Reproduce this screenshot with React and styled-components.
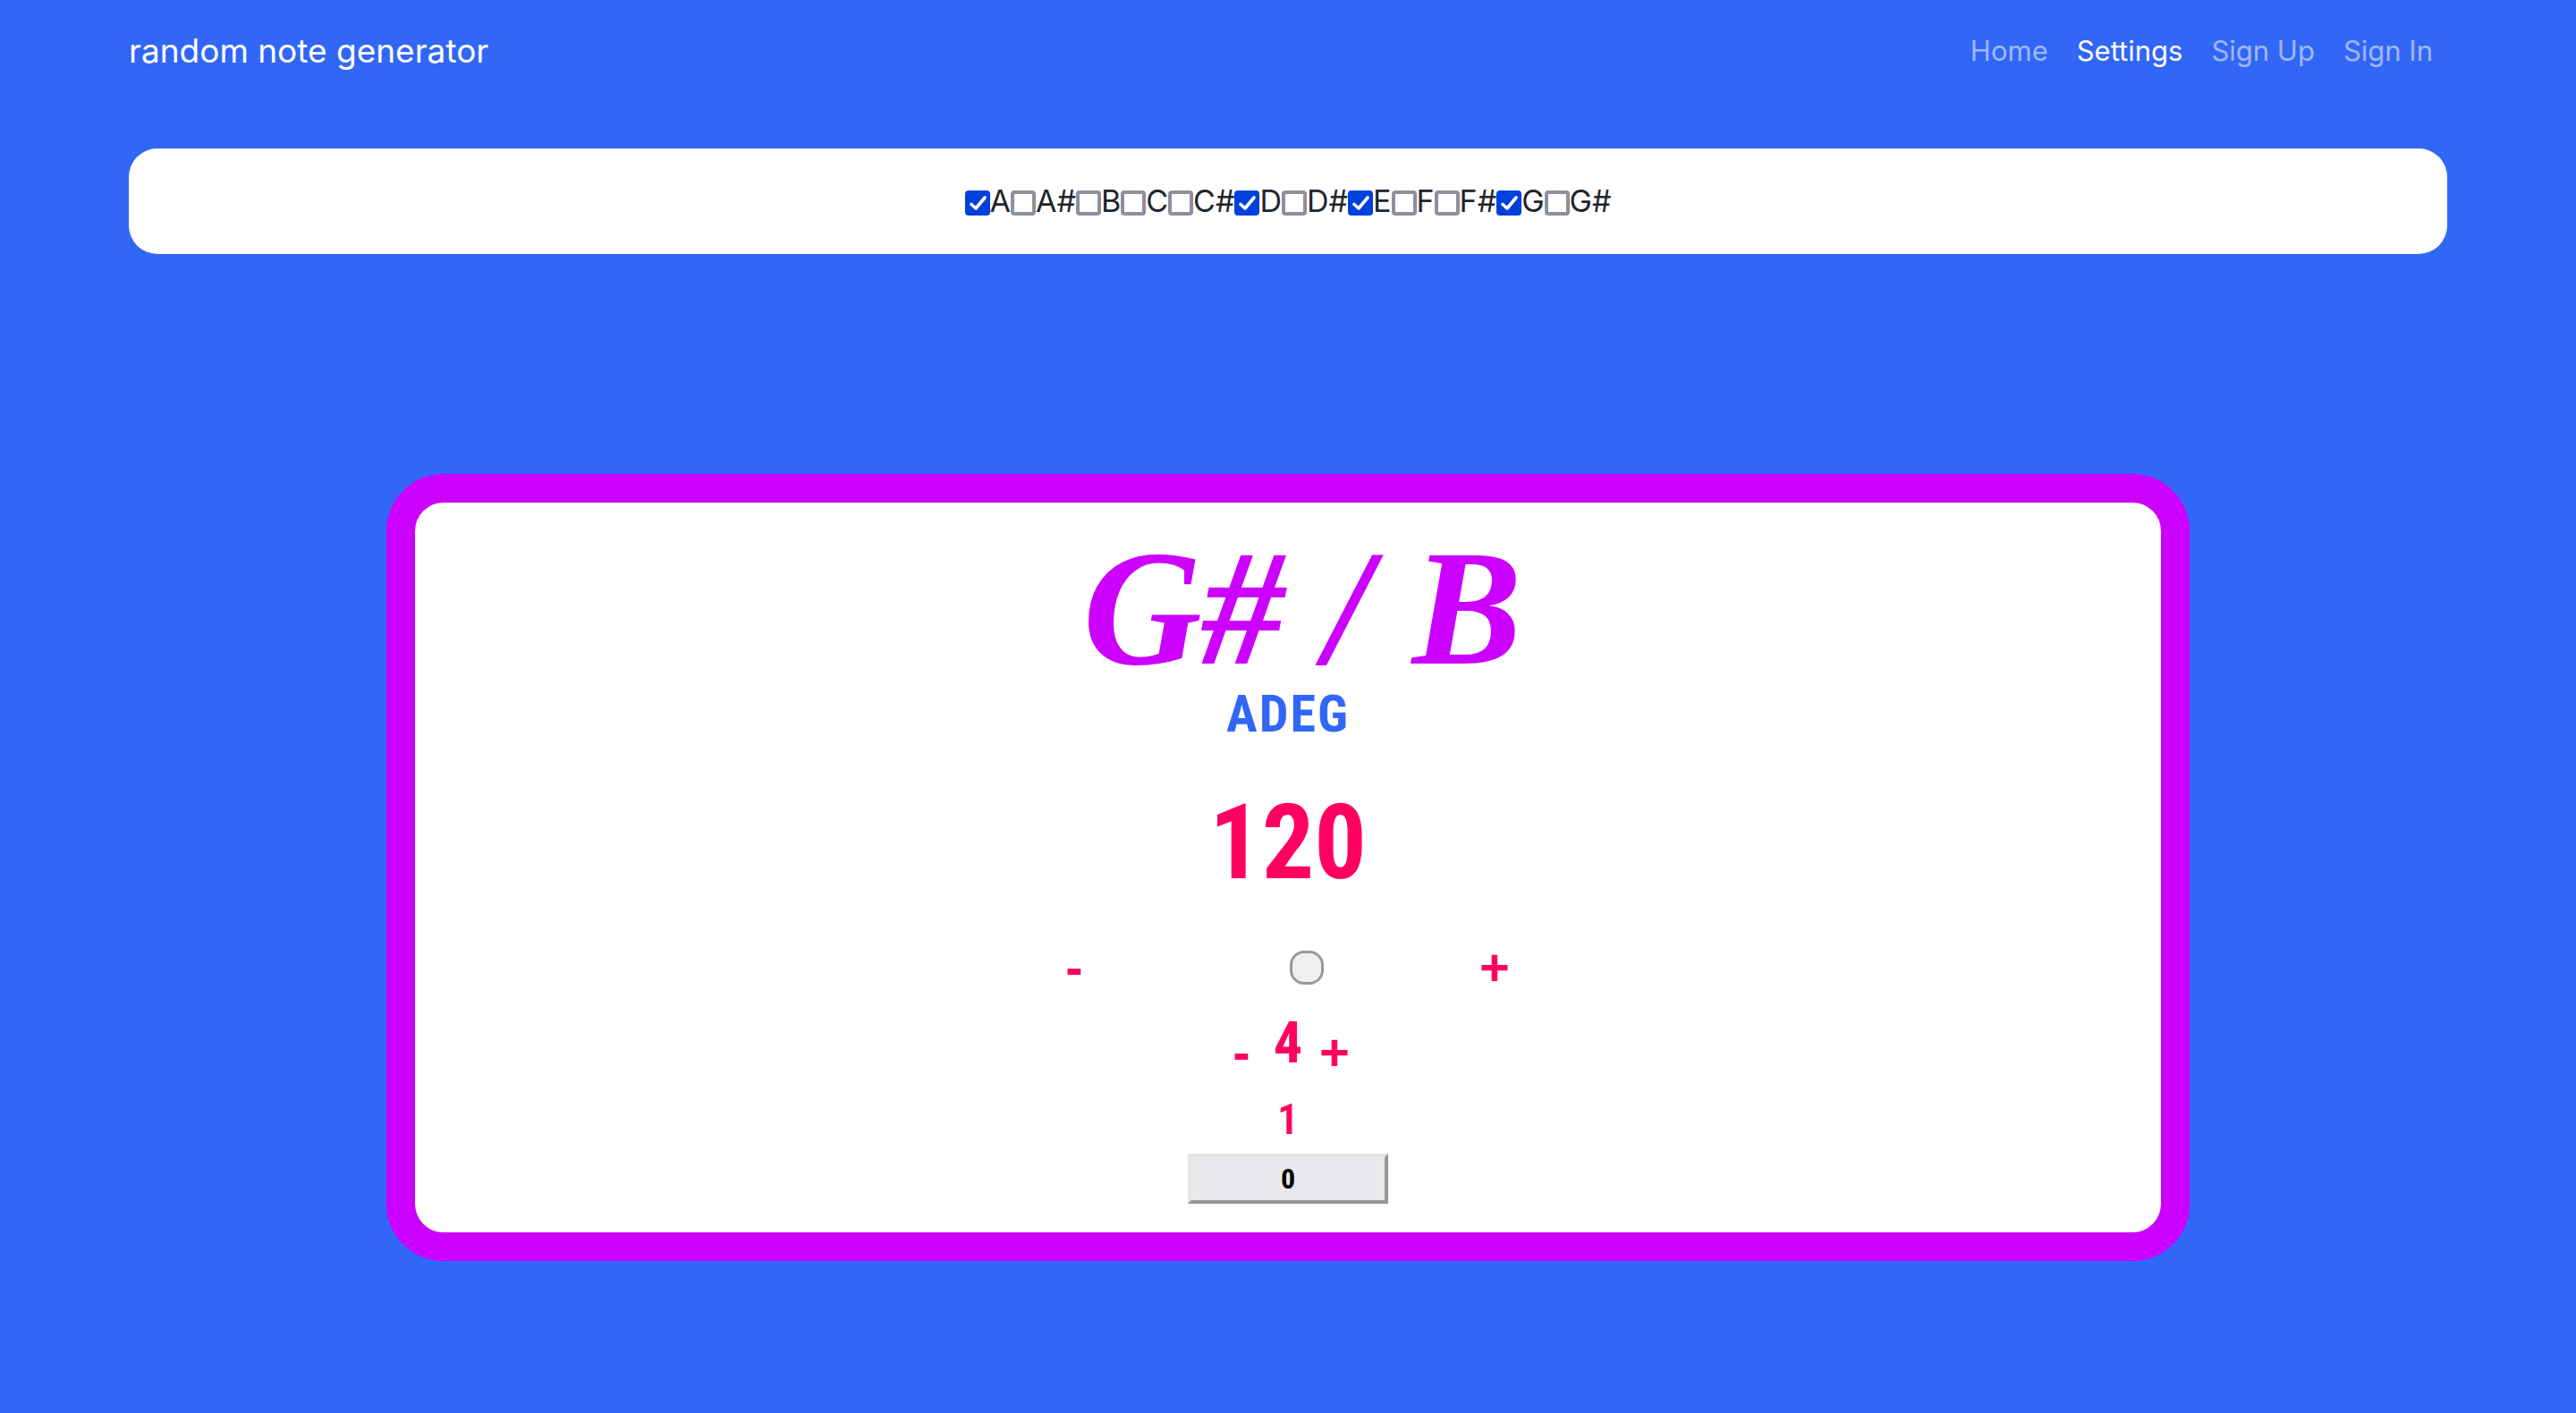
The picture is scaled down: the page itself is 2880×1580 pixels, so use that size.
import React, { useState } from "react";
import styled, { createGlobalStyle } from "styled-components";

const blue = "#3166f7";
const purple = "#cc00ff";
const pink = "#ff0060";
const condensed = `"Roboto Condensed", "Liberation Sans Narrow", "Liberation Sans", sans-serif`;

const GlobalStyle = createGlobalStyle`
  * { box-sizing: border-box; }
  body {
    margin: 0;
    background: ${blue};
    color: #212529;
    font-family: Inter, sans-serif;
  }
`;

const Navbar = styled.nav`
  display: flex;
  align-items: center;
  justify-content: space-between;
  padding: 25px 5%;
`;

const Brand = styled.a`
  color: #fff;
  font-size: 37px;
  line-height: 64px;
  text-decoration: none;
`;

const NavLinks = styled.div`
  display: flex;
  gap: 32px;
  padding-right: 16px;
`;

const NavLink = styled.a`
  color: ${(p) => (p.$active ? "#fff" : "rgba(255, 255, 255, 0.55)")};
  font-size: 31px;
  line-height: 64px;
  text-decoration: none;
`;

const NotePicker = styled.section`
  display: flex;
  justify-content: center;
  margin: 52px 5% 0;
  padding: 32px;
  border-radius: 32px;
  background: #fff;
`;

const NoteLabel = styled.label`
  display: flex;
  align-items: center;
  font-size: 34px;
  line-height: 54px;
`;

const CheckFrame = styled.span`
  display: grid;
  padding-top: 4px;

  > * {
    grid-area: 1 / 1;
  }
`;

const Checkbox = styled.input`
  appearance: none;
  width: 28px;
  height: 28px;
  margin: 0;
  border: 4px solid #8f8f9d;
  border-radius: 4px;
  background: #fff;

  &:checked {
    border-color: #0040dd;
    background: #0040dd;
  }
`;

const Tick = styled.svg`
  width: 28px;
  height: 28px;
  pointer-events: none;
`;

const Card = styled.main`
  display: flex;
  flex-direction: column;
  align-items: center;
  width: 70%;
  margin: 246px auto 0;
  padding: 32px;
  border: 32px solid ${purple};
  border-radius: 64px;
  background: #fff;
`;

const NoteName = styled.h1`
  margin: 0;
  padding-left: 32px;
  color: ${purple};
  font: italic 700 184px/172px "Liberation Serif", serif;
`;

const Scale = styled.h2`
  margin: 0;
  color: ${blue};
  font: 700 58px/64px ${condensed};
  letter-spacing: 2px;
`;

const Tempo = styled.output`
  margin-top: 48px;
  color: ${pink};
  font: 700 116px/128px ${condensed};
`;

const TempoRow = styled.div`
  display: flex;
  align-items: center;
  justify-content: center;
  gap: 16px;
  margin-top: 44px;
  padding-right: 8px;
`;

const StepButton = styled.button`
  width: 48px;
  padding: 0;
  border: 0;
  background: none;
  color: ${pink};
  font: 700 58px/64px "Liberation Sans", sans-serif;
`;

const Slider = styled.input`
  appearance: none;
  width: 390px;
  height: 38px;
  margin: 0;
  background: transparent;

  &::-webkit-slider-thumb {
    appearance: none;
    width: 38px;
    height: 38px;
    border: 3px solid #999;
    border-radius: 16px;
    background: #f0f0f0;
  }
`;

const BeatsRow = styled.div`
  display: flex;
  align-items: flex-end;
  margin-top: 27px;
`;

const Beats = styled.output`
  width: 56px;
  padding-bottom: 16px;
  color: ${pink};
  font: 700 64px/52px ${condensed};
  text-align: center;
`;

const Beat = styled.output`
  margin-top: 19px;
  color: ${pink};
  font: 600 48px/48px ${condensed};
`;

const CountButton = styled.button`
  width: 224px;
  height: 56px;
  margin-top: 14px;
  padding: 0;
  border: 4px solid;
  border-color: #e3e3e3 #979797 #979797 #e3e3e3;
  background: #e9e9ed;
  color: #000;
  font: 700 32px/48px ${condensed};
`;

const notes = ["A", "A#", "B", "C", "C#", "D", "D#", "E", "F", "F#", "G", "G#"];
const links = ["Home", "Settings", "Sign Up", "Sign In"];

export default function App() {
  const [selected, setSelected] = useState(["A", "D", "E", "G"]);
  const [tempo, setTempo] = useState(120);
  const [beats, setBeats] = useState(4);
  const [count, setCount] = useState(0);

  const toggle = (note) =>
    setSelected((now) => notes.filter((n) => now.includes(n) !== (n === note)));

  return (
    <>
      <GlobalStyle />
      <Navbar>
        <Brand href="#">random note generator</Brand>
        <NavLinks>
          {links.map((link) => (
            <NavLink key={link} href="#" $active={link === "Settings"}>
              {link}
            </NavLink>
          ))}
        </NavLinks>
      </Navbar>
      <NotePicker>
        {notes.map((note) => (
          <NoteLabel key={note}>
            <CheckFrame>
              <Checkbox
                type="checkbox"
                checked={selected.includes(note)}
                onChange={() => toggle(note)}
              />
              {selected.includes(note) && (
                <Tick viewBox="0 0 28 28" aria-hidden="true">
                  <path
                    d="M7 15.5l5 4.5L22 8"
                    fill="none"
                    stroke="#fff"
                    strokeWidth="3.6"
                    strokeLinecap="round"
                    strokeLinejoin="round"
                  />
                </Tick>
              )}
            </CheckFrame>
            {note}
          </NoteLabel>
        ))}
      </NotePicker>
      <Card>
        <NoteName>G# / B</NoteName>
        <Scale>{selected.join("")}</Scale>
        <Tempo>{tempo}</Tempo>
        <TempoRow>
          <StepButton onClick={() => setTempo(tempo - 1)}>-</StepButton>
          <Slider
            type="range"
            aria-label="Tempo"
            min="40"
            max="180"
            value={tempo}
            onChange={(e) => setTempo(Number(e.target.value))}
          />
          <StepButton onClick={() => setTempo(tempo + 1)}>+</StepButton>
        </TempoRow>
        <BeatsRow>
          <StepButton onClick={() => setBeats(beats - 1)}>-</StepButton>
          <Beats>{beats}</Beats>
          <StepButton onClick={() => setBeats(beats + 1)}>+</StepButton>
        </BeatsRow>
        <Beat>1</Beat>
        <CountButton onClick={() => setCount(count + 1)}>{count}</CountButton>
      </Card>
    </>
  );
}
